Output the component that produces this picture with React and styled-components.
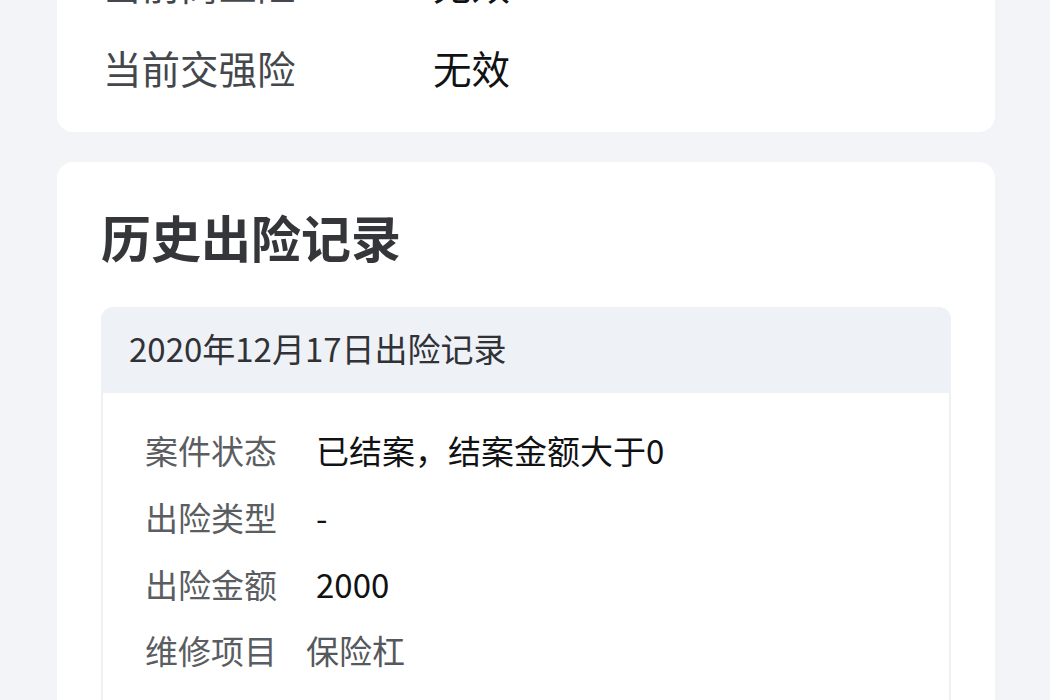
import React from "react";
import styled, { createGlobalStyle } from "styled-components";

const Global = createGlobalStyle`
  html, body { margin: 0; padding: 0; background: #f3f4f8; }
  body { font-family: "Noto Sans CJK SC", "Noto Sans", sans-serif; overflow: hidden; }
`;

const Page = styled.div`
  display: flex;
  flex-direction: column;
  gap: 30px;
  padding: 0 55px 0 57px;
  margin-top: -79px;
`;

const Card = styled.section`
  background: #ffffff;
  border-radius: 16px;
  padding: ${(p) => p.$pad};
  display: flex;
  flex-direction: column;
`;

const StatusRow = styled.div`
  display: flex;
  align-items: center;
  height: 84px;
  font-size: 38.5px;
`;

const StatusLabel = styled.span`
  width: 330px;
  color: #44474b;
`;

const StatusValue = styled.span`
  color: #111214;
`;

const Title = styled.h2`
  margin: 0 0 37px;
  font-size: 50px;
  line-height: 67px;
  font-weight: 600;
  color: #34363a;
`;

const Record = styled.div`
  border-radius: 12px;
  overflow: hidden;
  display: flex;
  flex-direction: column;
`;

const RecordHead = styled.div`
  background: #eef1f6;
  height: 86px;
  display: flex;
  align-items: center;
  padding: 0 28px 4px;
  box-sizing: border-box;
  font-size: 33px;
  color: #303236;
`;

const RecordBody = styled.div`
  background: #fff;
  border: 2px solid #eef0f3;
  border-top: none;
  padding: 24px 42px 40px;
  display: flex;
  flex-direction: column;
  min-height: 400px;
`;

const InfoRow = styled.div`
  display: flex;
  align-items: center;
  height: 66.7px;
  font-size: 33px;
`;

const InfoLabel = styled.span`
  color: #5a5d61;
  margin-right: ${(p) => (p.$tight ? "29px" : "39px")};
`;

const InfoValue = styled.span`
  color: ${(p) => (p.$muted ? "#55585c" : "#111214")};
`;

const rows = [
  { label: "案件状态", value: "已结案，结案金额大于0" },
  { label: "出险类型", value: "-" },
  { label: "出险金额", value: "2000" },
  { label: "维修项目", value: "保险杠", tight: true, muted: true },
];

export default function App() {
  return (
    <>
      <Global />
      <Page>
        <Card $pad="20px 46px 23px">
          <StatusRow>
            <StatusLabel>当前商业险</StatusLabel>
            <StatusValue>无效</StatusValue>
          </StatusRow>
          <StatusRow>
            <StatusLabel>当前交强险</StatusLabel>
            <StatusValue>无效</StatusValue>
          </StatusRow>
        </Card>
        <Card $pad="41px 44px 40px 44px">
          <Title>历史出险记录</Title>
          <Record>
            <RecordHead>2020年12月17日出险记录</RecordHead>
            <RecordBody>
              {rows.map((r) => (
                <InfoRow key={r.label}>
                  <InfoLabel $tight={r.tight}>{r.label}</InfoLabel>
                  <InfoValue $muted={r.muted}>{r.value}</InfoValue>
                </InfoRow>
              ))}
            </RecordBody>
          </Record>
        </Card>
      </Page>
    </>
  );
}
